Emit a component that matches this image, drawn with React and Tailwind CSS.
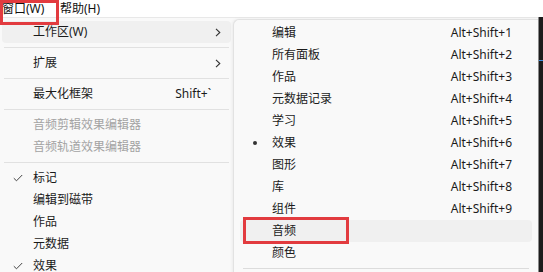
import React from "react";

const FONT = { fontFamily: '"Noto Sans", "Noto Sans CJK SC", sans-serif' };

const leftItems = [
  { label: "工作区(W)", sub: true, active: true },
  { sep: true },
  { label: "扩展", sub: true },
  { sep: true },
  { label: "最大化框架", shortcut: "Shift+`" },
  { sep: true },
  { label: "音频剪辑效果编辑器", disabled: true },
  { label: "音频轨道效果编辑器", disabled: true },
  { sep: true },
  { label: "标记", checked: true },
  { label: "编辑到磁带" },
  { label: "作品" },
  { label: "元数据" },
  { label: "效果", checked: true },
];

const workspaces = [
  { label: "编辑", shortcut: "Alt+Shift+1" },
  { label: "所有面板", shortcut: "Alt+Shift+2" },
  { label: "作品", shortcut: "Alt+Shift+3" },
  { label: "元数据记录", shortcut: "Alt+Shift+4" },
  { label: "学习", shortcut: "Alt+Shift+5" },
  { label: "效果", shortcut: "Alt+Shift+6", dot: true },
  { label: "图形", shortcut: "Alt+Shift+7" },
  { label: "库", shortcut: "Alt+Shift+8" },
  { label: "组件", shortcut: "Alt+Shift+9" },
  { label: "音频", active: true, boxed: true },
  { label: "颜色" },
];

function Chevron() {
  return (
    <svg width="6" height="9" viewBox="0 0 6 9" fill="none">
      <path d="M1 0.8 L4.8 4.5 L1 8.2" stroke="#333" strokeWidth="1.1" />
    </svg>
  );
}

function Check() {
  return (
    <svg width="10" height="8" viewBox="0 0 10 8" fill="none">
      <path d="M0.8 4.2 L3.5 6.8 L9.2 1" stroke="#444" strokeWidth="1" />
    </svg>
  );
}

function MenuItem({ item }) {
  if (item.sep) {
    return <div className="h-[9px] flex items-center px-[4px]"><div className="h-px w-full bg-[#e1e1e1]" /></div>;
  }
  return (
    <div
      className={`h-[22px] mx-[2px] rounded-[4px] flex items-center text-[12px] ${item.active ? "bg-[#f0f0f0]" : ""} ${item.disabled ? "text-[#a3a3a3]" : "text-[#1b1b1b]"}`}
    >
      <div className="w-[31px] flex justify-center pl-[1px]">{item.checked && <Check />}</div>
      <span className="flex-1">{item.label}</span>
      {item.shortcut && <span className="pr-[20px]">{item.shortcut}</span>}
      {item.sub && <span className="pr-[10px] flex items-center"><Chevron /></span>}
    </div>
  );
}

function SubItem({ item }) {
  return (
    <div className={`relative h-[22px] mx-[6px] rounded-[4px] flex items-center text-[12px] text-[#1b1b1b] ${item.active ? "bg-[#f0f0f0]" : ""}`}>
      <div className="w-[32px] flex justify-center pr-[3px]">
        {item.dot && <div className="w-[4px] h-[4px] rounded-full bg-[#333]" />}
      </div>
      <span className="flex-1">{item.label}</span>
      {item.shortcut && <span className="pr-[20px]">{item.shortcut}</span>}
      {item.boxed && (
        <div className="absolute left-[3px] top-[-3px] w-[106px] h-[27px] border-[3px] border-[#e23b3f]" />
      )}
    </div>
  );
}

export default function App() {
  return (
    <div className="relative w-[543px] h-[272px] overflow-hidden bg-[#f9f9f9]" style={FONT}>
      {/* menu bar */}
      <div className="h-[18px] bg-white border-b border-[#e8e8e8] flex items-center text-[12px] text-[#111]">
        <span className="pl-[2px] w-[60px] leading-none">窗口(W)</span>
        <span className="leading-none">帮助(H)</span>
      </div>
      <div className="absolute left-0 top-0 w-[59px] h-[25px] border-[3px] border-[#e23b3f]" />

      <div className="flex">
        {/* main menu */}
        <div className="w-[233px] pt-[3px] bg-[#f9f9f9]">
          {leftItems.map((it, i) => (
            <MenuItem key={i} item={it} />
          ))}
        </div>

        {/* workspace submenu */}
        <div className="w-[305px] mt-[1px] pt-[2px] bg-[#f9f9f9] border-l border-t border-[#e2e2e2] rounded-tl-[6px] shadow-[-1px_0_3px_rgba(0,0,0,0.06)]">
          {workspaces.map((it, i) => (
            <SubItem key={i} item={it} />
          ))}
          <div className="h-[9px] flex items-center px-[9px]"><div className="h-px w-full bg-[#dcdcdc]" /></div>
        </div>

        <div className="flex-1 mt-[-1px] bg-[#1c1c1c] border-l border-[#8a8a8a] flex flex-col">
          <div className="h-[43px]" />
          <div className="h-px bg-[#3d8ee0]" />
        </div>
      </div>
    </div>
  );
}
